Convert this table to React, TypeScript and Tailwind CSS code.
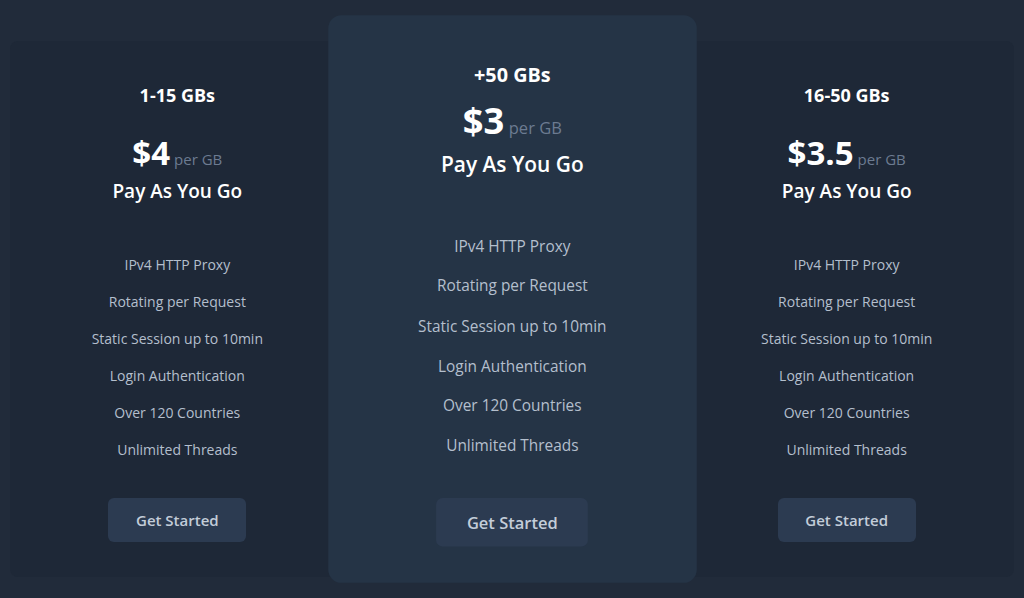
const features = [
  'IPv4 HTTP Proxy',
  'Rotating per Request',
  'Static Session up to 10min',
  'Login Authentication',
  'Over 120 Countries',
  'Unlimited Threads',
]

const plans = [
  { range: '1-15 GBs', price: '$4', featured: false },
  { range: '+50 GBs', price: '$3', featured: true },
  { range: '16-50 GBs', price: '$3.5', featured: false },
]

function PlanCard({ range, price, featured }: { range: string; price: string; featured: boolean }) {
  return (
    <div
      className={
        featured
          ? 'relative z-10 scale-110 rounded-xl bg-[#253446] px-6 pt-10 pb-[33px] flex flex-col items-center'
          : 'rounded-lg bg-[#1e2837] px-6 pt-10 pb-[35px] flex flex-col items-center'
      }
    >
      <h3 className="text-[18px] leading-7 font-bold text-white">{range}</h3>
      <div className={featured ? 'mt-[10px] flex items-baseline gap-1' : 'mt-[26px] flex items-baseline gap-1'}>
        <span className="text-[33px] leading-9 font-bold text-white">{price}</span>
        <span className="text-[15px] font-medium text-[#6c7b91]">per GB</span>
      </div>
      <p
        className={
          featured
            ? 'mt-[8px] text-[19px] leading-7 font-semibold text-white'
            : 'mt-[6px] text-[19px] leading-7 font-semibold text-white'
        }
      >
        Pay As You Go
      </p>
      <ul
        className={
          featured
            ? 'mt-[50px] flex flex-col items-center gap-[16.3px] text-[14px] leading-5 text-[#b4bfcd]'
            : 'mt-[50px] flex flex-col items-center gap-[17px] text-[14px] leading-5 text-[#b4bfcd]'
        }
      >
        {features.map((f) => (
          <li key={f}>{f}</li>
        ))}
      </ul>
      <button className="mt-[38px] h-[44px] w-[138px] rounded-md bg-[#2c3b51] text-[15px] font-semibold text-[#c3cdd9]">
        Get Started
      </button>
    </div>
  )
}

export default function App() {
  return (
    <div
      className="min-h-[598px] w-full bg-[#212b3a] px-[10px] pt-[41px]"
      style={{ fontFamily: '"Open Sans", "Noto Sans", sans-serif' }}
    >
      <div className="grid grid-cols-3 items-start">
        {plans.map((p) => (
          <PlanCard key={p.range} {...p} />
        ))}
      </div>
    </div>
  )
}
